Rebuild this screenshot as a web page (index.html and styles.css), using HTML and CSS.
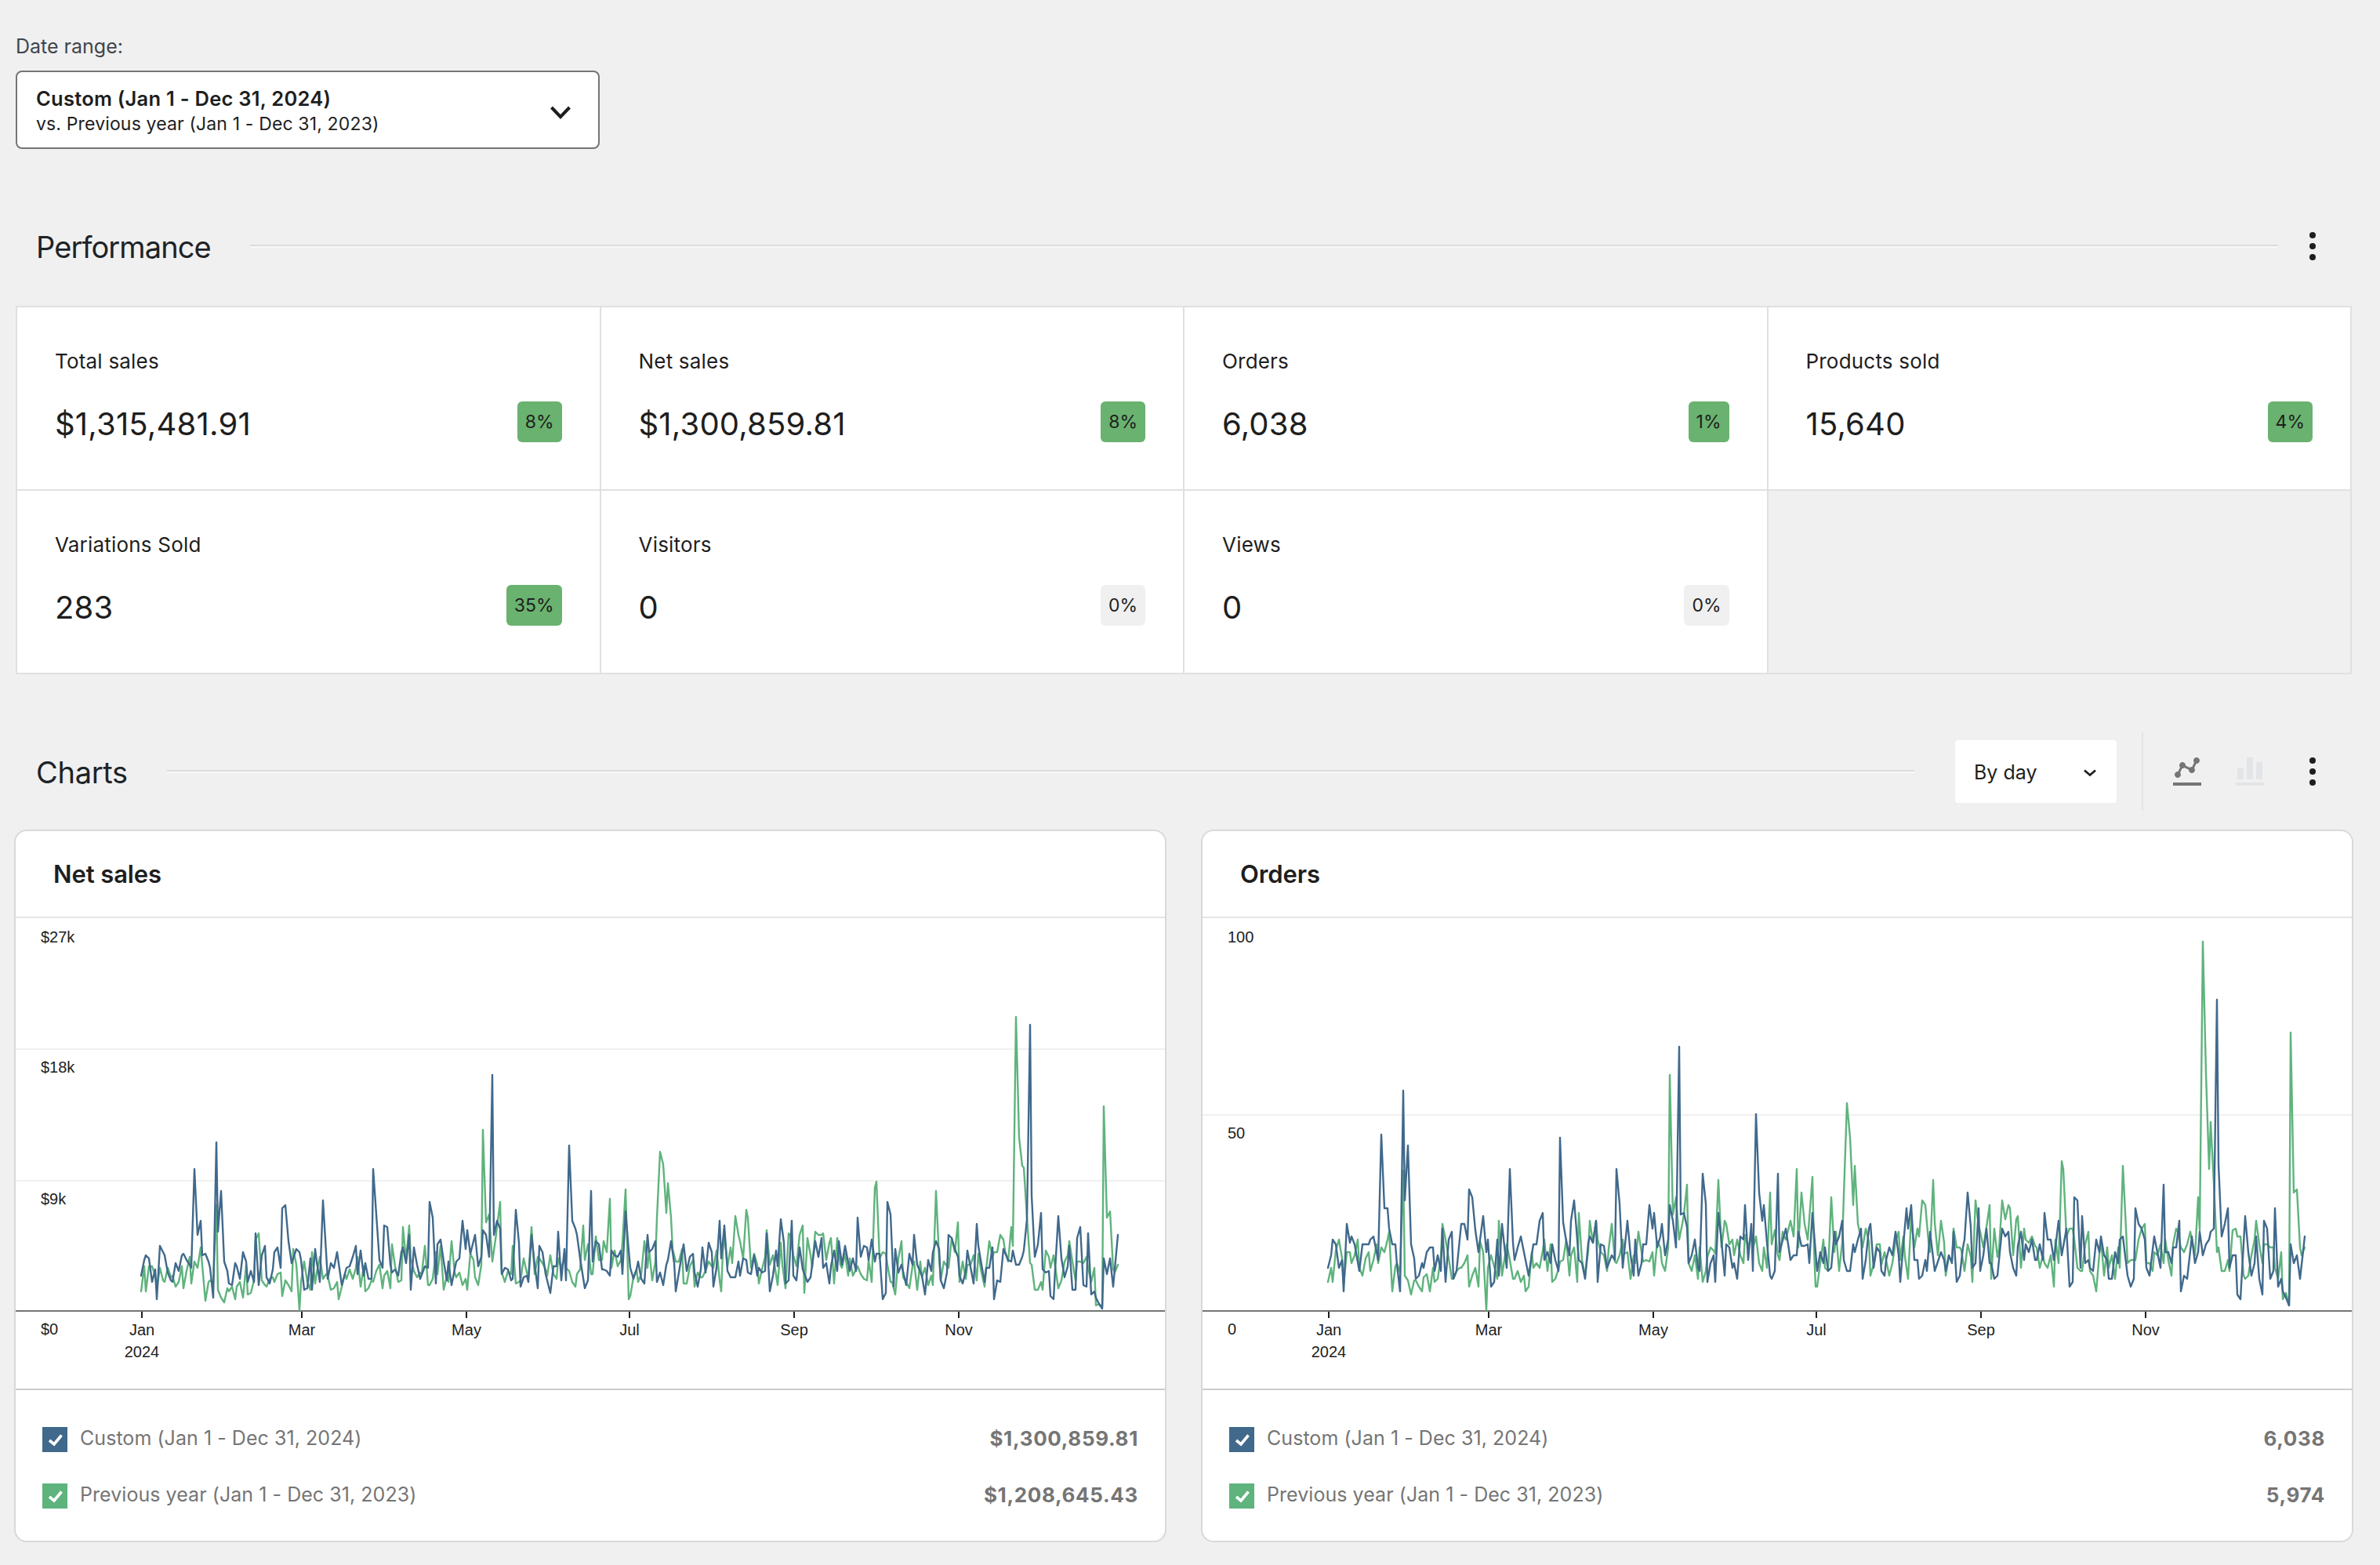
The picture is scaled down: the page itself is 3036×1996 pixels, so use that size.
FILE: index.html
```html
<!DOCTYPE html>
<html lang="en">
<head>
  <meta charset="UTF-8">
  <meta name="viewport" content="width=device-width, initial-scale=1.0">
  <title>Analytics Overview</title>
  <link rel="stylesheet" href="styles.css">
</head>
<body>
  <!-- Date filter -->
  <section class="filters">
    <span class="filter-label">Date range:</span>
    <button class="date-picker">
      <span class="date-picker-text">
        <strong>Custom (Jan 1 - Dec 31, 2024)</strong>
        <span>vs. Previous year (Jan 1 - Dec 31, 2023)</span>
      </span>
      <svg class="icon" viewBox="0 0 48 48"><path d="M12.5 19L24 31l11.500-12" fill="none" stroke="#1e1e1e" stroke-width="4"/></svg>
    </button>
  </section>

  <!-- Performance -->
  <section class="performance">
    <div class="section-header">
      <h2 class="section-title">Performance</h2>
      <hr>
      <svg class="icon" viewBox="0 0 48 48"><circle cx="24" cy="10" r="4"/><circle cx="24" cy="24" r="4"/><circle cx="24" cy="38" r="4"/></svg>
    </div>
    <div class="stats">
      <div class="stat">
        <div class="stat-label">Total sales</div>
        <div class="stat-data"><span class="stat-value">$1,315,481.91</span><span class="badge up">8%</span></div>
      </div>
      <div class="stat">
        <div class="stat-label">Net sales</div>
        <div class="stat-data"><span class="stat-value">$1,300,859.81</span><span class="badge up">8%</span></div>
      </div>
      <div class="stat">
        <div class="stat-label">Orders</div>
        <div class="stat-data"><span class="stat-value">6,038</span><span class="badge up">1%</span></div>
      </div>
      <div class="stat">
        <div class="stat-label">Products sold</div>
        <div class="stat-data"><span class="stat-value">15,640</span><span class="badge up">4%</span></div>
      </div>
      <div class="stat">
        <div class="stat-label">Variations Sold</div>
        <div class="stat-data"><span class="stat-value">283</span><span class="badge up">35%</span></div>
      </div>
      <div class="stat">
        <div class="stat-label">Visitors</div>
        <div class="stat-data"><span class="stat-value">0</span><span class="badge">0%</span></div>
      </div>
      <div class="stat">
        <div class="stat-label">Views</div>
        <div class="stat-data"><span class="stat-value">0</span><span class="badge">0%</span></div>
      </div>
      <div class="stat empty"></div>
    </div>
  </section>

  <!-- Charts -->
  <section class="charts">
    <div class="section-header">
      <h2 class="section-title">Charts</h2>
      <hr>
      <div class="interval">
        <span>By day</span>
        <svg viewBox="0 0 16 10"><path d="M1 1.500l7 6 7-6" fill="none" stroke="#1e1e1e" stroke-width="2.800"/></svg>
      </div>
      <div class="chart-types">
        <svg class="icon line-type" viewBox="0 0 24 24"><path d="M3 19h18v2H3zm3-3c1.100 0 2-.9 2-2 0-.5-.2-1-.5-1.300L8.800 10H9c.5 0 1-.2 1.300-.5l2.700 1.400v.1c0 1.100.9 2 2 2s2-.9 2-2c0-.5-.2-.9-.5-1.300L17.800 7h.2c1.100 0 2-.9 2-2s-.9-2-2-2-2 .9-2 2c0 .5.2 1 .5 1.300L15.200 9H15c-.5 0-1 .2-1.300.5L11 8.200V8c0-1.100-.9-2-2-2s-2 .9-2 2c0 .5.2 1 .5 1.300L6.200 12H6c-1.100 0-2 .9-2 2s.9 2 2 2z"/></svg>
        <svg class="icon bar-type" viewBox="0 0 24 24"><path d="M21 21H3v-2h18v2zM8 10H4v7h4v-7zm6-7h-4v14h4V3zm6 3h-4v11h4V6z"/></svg>
        <svg class="icon" viewBox="0 0 48 48"><circle cx="24" cy="10" r="4"/><circle cx="24" cy="24" r="4"/><circle cx="24" cy="38" r="4"/></svg>
      </div>
    </div>

    <div class="chart-grid">
      <div class="card">
        <h3 class="card-title">Net sales</h3>
        <svg class="chart" viewBox="0 0 733 300">
          <path class="grid" d="M0 83.500h733M0 167.500h733"/>
          <path class="axis" d="M0 250.500h733"/>
          <path class="ticks" d="M80.500 251v4M182.500 251v4M287.500 251v4M391.500 251v4M496.500 251v4M601.500 251v4"/>
          <g transform="translate(80 250) scale(1 -1)">
            <polyline class="line previous" points="0,12 2,28 3,12 5,28 7,28 9,22 10,14 12,27 14,19 15,18 17,27 19,21 20,22 22,15 24,18 26,28 27,14 29,25 31,34 32,17 34,31 36,27 38,40 41,6 43,18 44,19 46,17 48,67 49,13 51,8 53,5 55,14 56,12 58,15 60,7 61,15 63,18 65,8 67,29 68,10 70,11 72,19 73,45 75,49 77,19 79,16 80,15 82,20 84,21 85,18 87,23 89,24 90,9 92,19 94,16 96,12 97,39 99,29 101,0 102,18 104,31 106,18 108,13 109,37 111,17 112,24 114,34 116,20 118,23 119,22 121,13 123,14 125,18 126,7 128,15 130,23 131,20 133,26 135,20 137,27 138,34 140,15 142,28 143,12 145,14 147,19 148,18 150,25 152,29 154,14 155,22 157,25 159,14 160,42 162,28 164,18 166,19 167,53 169,32 171,54 172,33 174,25 176,21 178,24 179,23 181,41 183,16 184,16 186,20 188,37 189,23 191,41 193,13 195,22 196,18 198,44 200,24 201,21 203,24 205,16 207,20 208,13 210,36 212,32 213,21 215,16 217,29 218,115 220,56 222,61 224,31 226,45 227,53 229,69 230,24 232,18 234,25 236,23 237,41 239,17 241,18 242,19 244,33 246,24 247,21 249,53 251,23 253,34 254,33 256,30 258,26 259,22 261,35 263,23 265,20 266,33 268,27 270,33 271,27 273,25 275,18 277,15 278,23 280,26 282,54 283,32 285,42 287,23 288,23 290,47 292,32 294,32 295,44 297,37 299,71 300,27 302,38 304,28 306,32 307,43 309,77 311,7 312,9 314,21 316,26 317,18 319,23 321,44 323,27 324,39 326,19 328,31 329,59 331,101 333,93 335,62 336,81 338,59 339,39 341,31 343,31 345,39 346,17 348,17 350,28 352,32 353,15 355,24 357,21 358,21 360,25 362,31 364,28 365,27 367,38 368,29 369,19 370,12 371,36 372,49 374,28 376,40 377,30 379,60 381,48 382,44 384,33 386,64 387,59 389,27 391,36 393,29 394,17 396,26 398,34 399,51 401,29 403,35 404,29 406,16 408,43 409,29 411,14 413,49 414,48 416,35 418,28 420,48 422,54 423,11 425,46 427,35 428,27 430,50 432,48 434,48 435,49 437,32 439,43 440,46 442,17 444,46 446,29 447,27 449,36 451,22 452,33 454,22 456,26 457,28 459,23 461,20 463,19 464,32 466,18 468,78 469,82 471,33 473,37 475,36 476,29 478,18 479,18 481,10 483,33 485,44 486,21 488,18 490,14 492,28 493,31 495,13 497,31 498,21 500,27 502,16 504,22 505,16 507,76 509,33 510,19 512,31 514,28 515,27 517,46 519,37 521,56 522,18 524,31 526,20 527,29 529,29 531,35 533,19 534,36 536,24 538,15 539,26 541,44 543,34 544,37 546,37 548,48 550,45 551,38 553,31 555,53 556,41 558,187 560,110 562,92 563,91 565,59 567,30 568,29 570,13 572,13 574,18 575,13 577,38 579,34 580,27 582,35 584,21 585,14 587,19 589,31 591,35 592,44 594,31 596,19 597,31 599,31 601,30 603,34 604,27 606,18 608,27 609,3 611,4 613,2 614,130 616,59 618,63 620,26 621,24 623,29"/>
            <polyline class="line current" points="0,22 2,32 3,35 5,33 7,18 9,26 10,7 12,41 14,37 15,35 17,24 19,19 20,18 22,30 24,25 26,35 27,36 29,32 31,29 32,27 34,90 36,48 38,57 39,35 41,36 43,31 44,27 46,8 48,107 49,50 51,76 53,31 55,25 56,17 58,16 60,30 61,28 63,20 65,37 67,31 68,18 70,25 72,18 73,49 75,16 77,35 79,41 80,21 82,17 84,26 85,37 87,40 89,27 90,65 92,67 94,44 96,30 97,33 99,39 101,37 102,32 104,13 106,14 108,33 109,13 111,39 112,31 114,18 116,70 119,20 121,30 123,27 125,37 128,16 131,27 133,28 135,34 137,41 138,23 140,38 142,22 143,30 145,20 147,20 148,90 150,61 152,32 154,27 155,54 157,53 159,29 160,24 162,26 164,22 166,37 167,40 169,30 171,48 172,13 174,40 176,29 178,20 181,28 183,27 184,69 186,59 188,17 189,42 191,45 193,31 195,19 196,31 198,16 201,31 203,33 205,57 207,39 208,51 210,36 213,48 215,28 217,34 218,51 220,48 222,34 224,150 225,48 227,57 229,52 230,23 232,27 234,26 236,19 237,20 239,64 241,43 242,15 244,21 246,22 247,18 249,48 251,29 253,14 254,41 256,37 258,23 261,11 263,28 265,28 266,50 268,19 270,39 271,19 273,105 275,57 277,52 278,48 280,33 283,14 285,19 287,76 288,31 290,44 292,42 294,26 295,26 297,25 299,22 300,38 302,35 304,34 306,38 307,23 309,63 311,38 312,27 314,20 316,26 317,31 319,20 321,17 323,48 324,37 326,39 328,44 329,18 331,24 333,16 335,29 336,32 338,44 340,30 341,12 343,24 346,42 348,25 350,34 352,36 353,24 355,15 357,26 358,40 360,24 362,43 364,37 365,15 367,27 369,57 370,33 372,54 374,25 376,21 379,21 381,31 382,22 384,33 386,32 387,24 389,23 391,35 393,22 394,27 396,24 398,25 399,49 401,12 403,22 405,38 406,28 408,58 410,43 411,17 413,19 415,57 416,22 418,19 420,40 422,26 425,18 427,21 430,44 432,34 434,46 435,27 437,30 439,17 440,28 442,38 444,25 445,44 447,29 449,41 452,25 454,33 456,25 457,59 459,34 461,41 463,40 464,32 466,45 468,31 469,36 471,36 473,7 475,11 476,69 478,61 480,15 481,39 483,24 485,29 488,16 490,36 492,29 493,48 495,29 498,22 500,10 502,32 504,25 505,37 507,44 509,39 510,19 512,14 514,24 515,48 517,46 519,39 521,34 522,22 524,17 526,25 527,38 531,17 533,55 534,41 536,29 538,18 539,27 541,27 543,40 544,7 546,19 548,18 550,39 553,32 555,31 556,38 558,29 560,29 562,34 563,38 565,58 567,182 568,73 570,34 572,42 574,62 575,26 577,24 579,25 580,9 582,7 583,26 585,60 587,33 589,21 591,28 592,41 594,13 596,13 597,46 599,53 601,16 603,15 604,49 606,10 608,12 609,8 611,4 613,1 614,33 616,23 618,33 620,15 623,48"/>
          </g>
          <g class="y-labels">
            <text x="16" y="15.500">$27k</text>
            <text x="16" y="98.500">$18k</text>
            <text x="16" y="182.500">$9k</text>
            <text x="16" y="265.500">$0</text>
          </g>
          <g class="x-labels">
            <text x="80.500" y="265.800">Jan</text>
            <text x="80.500" y="279.800">2024</text>
            <text x="182.500" y="265.800">Mar</text>
            <text x="287.500" y="265.800">May</text>
            <text x="391.500" y="265.800">Jul</text>
            <text x="496.500" y="265.800">Sep</text>
            <text x="601.500" y="265.800">Nov</text>
          </g>
        </svg>
        <div class="legend">
          <div class="legend-item">
            <span class="checkbox current"><svg viewBox="0 0 32 32"><path d="M9 17l6 5 9.500-11.500"/></svg></span>
            <span class="legend-label">Custom (Jan 1 - Dec 31, 2024)</span>
            <span class="legend-value">$1,300,859.81</span>
          </div>
          <div class="legend-item">
            <span class="checkbox previous"><svg viewBox="0 0 32 32"><path d="M9 17l6 5 9.500-11.500"/></svg></span>
            <span class="legend-label">Previous year (Jan 1 - Dec 31, 2023)</span>
            <span class="legend-value">$1,208,645.43</span>
          </div>
        </div>
      </div>

      <div class="card">
        <h3 class="card-title">Orders</h3>
        <svg class="chart" viewBox="0 0 733 300">
          <path class="grid" d="M0 125.500h733"/>
          <path class="axis" d="M0 250.500h733"/>
          <path class="ticks" d="M80.500 251v4M182.500 251v4M287.500 251v4M391.500 251v4M496.500 251v4M601.500 251v4"/>
          <g transform="translate(80 250) scale(1 -1)">
            <polyline class="line previous" points="0,18 2,27 3,18 5,38 7,45 9,33 10,16 12,37 14,37 15,30 17,35 19,45 20,27 22,22 24,33 26,37 27,25 29,32 31,42 32,30 34,40 36,37 38,45 39,50 41,12 43,28 44,30 46,24 48,89 49,22 51,19 53,10 55,19 56,19 58,15 60,12 61,21 63,23 65,12 67,27 68,18 70,20 72,34 73,55 75,45 77,33 79,20 80,20 82,25 84,27 85,27 87,30 89,35 90,15 92,22 94,27 96,15 97,44 99,37 101,0 102,27 104,35 106,28 108,20 109,57 111,22 114,42 116,32 118,20 119,20 121,25 123,18 125,22 126,12 128,15 130,37 131,27 133,30 135,27 137,38 138,45 140,25 142,42 143,18 145,20 147,26 148,31 150,32 152,45 154,22 155,35 157,40 159,18 160,62 162,32 164,22 166,38 167,57 169,43 171,57 172,45 174,37 176,35 178,25 179,39 181,55 183,31 184,30 186,35 188,45 189,36 191,37 193,20 195,35 196,30 198,50 200,37 201,31 203,32 205,31 207,37 208,22 210,44 212,40 213,30 215,25 217,40 218,150 220,61 222,72 224,45 226,55 227,61 229,80 230,30 232,25 234,35 236,20 237,40 239,18 241,25 242,34 244,40 246,38 247,36 249,83 251,40 253,57 254,55 256,42 258,45 259,35 261,45 263,35 265,30 266,48 268,40 270,48 271,39 273,47 275,30 277,25 278,40 280,27 282,75 283,42 285,51 287,35 288,32 290,50 292,45 295,57 297,47 299,90 300,40 302,75 304,55 306,45 309,85 310,39 311,15 312,15 314,30 316,45 317,27 319,25 321,72 323,37 324,50 326,25 328,43 329,73 331,132 333,110 335,67 336,92 338,55 340,46 341,40 343,52 345,44 346,22 348,29 350,42 352,42 353,29 355,37 358,22 360,30 362,44 364,50 365,32 367,47 368,34 370,20 372,59 374,40 376,52 377,47 379,70 381,67 383,44 384,37 386,83 387,56 389,35 391,57 393,43 394,22 396,34 398,32 399,52 401,40 403,40 404,38 406,25 408,42 410,34 411,18 413,70 415,54 416,50 418,40 420,53 422,67 423,20 425,52 427,34 428,39 430,70 432,58 434,67 435,65 437,35 439,58 440,60 442,27 444,52 445,45 447,43 449,47 451,41 452,40 454,27 456,35 457,30 459,27 461,35 463,15 464,45 466,30 468,95 469,90 471,47 473,52 475,52 476,45 478,27 480,25 481,25 483,42 485,50 486,25 488,22 490,12 492,36 493,45 495,22 497,40 498,27 500,35 502,20 504,40 505,27 507,92 509,52 510,30 512,32 515,32 517,45 519,52 521,55 522,30 524,30 526,25 527,37 529,35 531,42 533,30 534,45 536,32 538,22 539,42 541,52 542,50 544,40 546,37 548,42 550,50 551,45 553,35 555,72 556,51 558,235 560,151 562,90 563,120 565,81 567,37 568,40 570,25 572,25 574,32 575,25 577,51 579,52 580,47 582,47 584,22 585,20 587,22 589,35 591,45 592,57 594,42 596,30 597,42 599,42 601,40 603,40 604,27 606,20 608,37 609,7 611,11 613,3 614,177 616,75 618,77 620,40 621,35 623,40"/>
            <polyline class="line current" points="0,27 2,35 3,45 5,42 7,27 9,32 10,12 12,55 14,43 15,47 17,42 20,25 22,42 26,42 27,45 29,47 32,32 34,112 36,65 38,65 39,52 41,42 43,42 44,29 46,12 48,140 49,70 51,105 53,42 55,33 56,20 58,22 60,30 61,27 63,37 65,40 67,40 68,25 70,35 72,25 73,52 75,18 77,45 79,50 80,20 82,25 85,55 87,55 89,45 90,77 92,72 94,51 96,37 97,45 99,60 101,37 102,45 104,15 106,18 108,45 109,22 111,55 114,27 116,90 118,43 119,32 121,40 123,47 128,22 131,42 133,42 135,57 137,62 138,32 140,37 142,30 143,42 145,32 147,25 148,110 150,56 152,44 154,35 155,57 157,70 160,32 162,30 164,20 166,43 167,47 169,43 171,57 172,18 174,42 176,41 178,27 181,35 183,32 184,90 186,68 188,27 191,57 193,35 195,22 196,45 198,22 200,30 201,42 203,42 205,67 207,52 208,62 210,40 212,47 213,55 215,35 217,45 218,67 220,57 222,40 224,168 225,61 227,62 229,53 230,30 232,35 234,45 236,27 237,25 239,87 241,68 242,18 244,30 246,35 247,18 249,62 251,44 253,22 254,42 256,40 258,27 259,30 261,20 263,47 265,45 266,67 268,32 270,55 271,25 273,125 275,75 277,57 278,67 280,43 282,22 283,20 285,25 287,87 288,37 292,52 295,32 297,35 299,35 300,50 302,41 304,41 306,42 307,30 309,62 312,25 314,37 316,30 317,40 319,25 321,27 323,50 324,42 326,47 328,57 329,32 331,25 333,25 335,42 336,37 338,45 340,52 341,20 343,32 345,52 346,55 348,27 350,40 352,37 353,25 355,22 356,32 358,40 360,35 362,50 364,35 365,18 367,42 369,65 370,52 372,67 374,32 376,32 377,20 379,22 381,32 382,25 384,50 387,25 391,37 393,32 394,25 396,35 398,30 399,50 401,18 403,22 405,40 406,45 408,75 410,53 411,27 413,30 415,65 416,25 418,35 420,52 422,30 423,30 425,20 427,22 430,52 432,47 434,50 435,37 437,27 439,22 440,41 442,50 444,32 445,42 447,37 449,45 451,32 452,32 454,42 456,32 457,62 459,45 461,45 463,32 466,57 468,35 471,52 473,15 475,18 476,72 478,70 480,27 481,60 483,30 485,32 486,27 488,25 490,45 492,37 493,47 495,35 497,32 498,20 500,20 502,37 504,30 505,45 507,47 510,22 512,15 514,20 515,65 517,55 519,52 521,45 522,27 524,22 527,47 531,27 533,80 534,37 536,37 538,30 539,40 541,40 543,57 544,12 546,22 548,20 551,47 553,30 555,37 556,50 558,35 560,42 562,45 563,50 565,52 567,198 568,93 570,47 572,55 574,65 575,27 577,35 579,35 580,10 582,7 585,60 587,37 589,22 591,30 592,47 594,20 596,10 597,57 599,52 601,20 603,25 604,65 606,15 608,20 609,12 611,8 613,3 614,42 616,30 618,35 620,20 623,47"/>
          </g>
          <g class="y-labels">
            <text x="16" y="15.500">100</text>
            <text x="16" y="140.500">50</text>
            <text x="16" y="265.500">0</text>
          </g>
          <g class="x-labels">
            <text x="80.500" y="265.800">Jan</text>
            <text x="80.500" y="279.800">2024</text>
            <text x="182.500" y="265.800">Mar</text>
            <text x="287.500" y="265.800">May</text>
            <text x="391.500" y="265.800">Jul</text>
            <text x="496.500" y="265.800">Sep</text>
            <text x="601.500" y="265.800">Nov</text>
          </g>
        </svg>
        <div class="legend">
          <div class="legend-item">
            <span class="checkbox current"><svg viewBox="0 0 32 32"><path d="M9 17l6 5 9.500-11.500"/></svg></span>
            <span class="legend-label">Custom (Jan 1 - Dec 31, 2024)</span>
            <span class="legend-value">6,038</span>
          </div>
          <div class="legend-item">
            <span class="checkbox previous"><svg viewBox="0 0 32 32"><path d="M9 17l6 5 9.500-11.500"/></svg></span>
            <span class="legend-label">Previous year (Jan 1 - Dec 31, 2023)</span>
            <span class="legend-value">5,974</span>
          </div>
        </div>
      </div>
    </div>
  </section>
</body>
</html>
```
FILE: styles.css
```css
/* Base Styles */
* {
  box-sizing: border-box;
}
body {
  margin: 0;
  padding: 41px 36px 0 20px;
  background: #f0f0f0;
  color: #1e1e1e;
  font-family: Inter, 'Liberation Sans', sans-serif;
}
h2, h3 {
  margin: 0;
}
svg {
  display: block;
}
.icon {
  width: 48px;
  height: 48px;
  flex-shrink: 0;
  fill: #1e1e1e;
}

/* Date filter */
.filter-label {
  display: block;
  margin-bottom: 13px;
  font-size: 25px;
  line-height: 36px;
  color: #40464d;
}
.date-picker {
  display: flex;
  align-items: center;
  justify-content: space-between;
  width: 745px;
  height: 100px;
  padding: 3px 24px 0 24px;
  border: 2px solid #757575;
  border-radius: 8px;
  background: #fff;
  color: #1e1e1e;
  font-family: inherit;
  text-align: left;
}
.date-picker-text {
  display: flex;
  flex-direction: column;
  font-size: 23px;
  line-height: 32px;
  letter-spacing: 0.15px;
}
.date-picker-text strong {
  font-size: 25.5px;
  font-weight: 600;
  letter-spacing: 0.25px;
}

/* Section headers */
.section-header {
  display: flex;
  align-items: center;
  height: 100px;
  margin-top: 74px;
  padding: 0 26px 0 26px;
}
.section-title {
  padding-top: 1px;
  font-size: 38px;
  font-weight: 400;
  letter-spacing: -0.9px;
  color: #1d2327;
}
.section-header hr {
  flex: 1;
  height: 4px;
  margin: 0 20px 0 50px;
  border: 0;
  border-top: 2px solid #dcdcde;
  background: #f8f8f8;
}

/* Performance */
.stats {
  display: grid;
  grid-template-columns: repeat(4, 1fr);
  margin-top: 26px;
  border-top: 2px solid #e0e0e0;
  border-left: 2px solid #e0e0e0;
}
.stat {
  height: 234px;
  padding: 53px 48px 0 48px;
  border-right: 2px solid #e0e0e0;
  border-bottom: 2px solid #e0e0e0;
  background: #fff;
}
.stat.empty {
  background: #f0f0f0;
}
.stat-label {
  font-size: 26px;
  line-height: 32px;
  letter-spacing: 0.2px;
}
.stat-data {
  display: flex;
  align-items: center;
  justify-content: space-between;
  height: 60px;
  margin-top: 33px;
}
.stat-value {
  font-size: 40px;
  letter-spacing: 0.2px;
}
.badge {
  margin-bottom: 4px;
  padding: 0 10px;
  border-radius: 6px;
  background: #f0f0f0;
  font-size: 23px;
  line-height: 52px;
}
.badge.up {
  background: #6ab26f;
}

/* Charts */
.charts .section-title {
  letter-spacing: -0.3px;
}
.charts .section-header hr {
  margin-right: 52px;
}
.interval {
  display: flex;
  align-items: center;
  justify-content: space-between;
  width: 206px;
  height: 80px;
  padding: 1px 26px 0 24px;
  border-radius: 4px;
  background: #fff;
  font-size: 25px;
}
.interval svg {
  width: 16px;
  height: 10px;
  margin-top: 2px;
}
.chart-types {
  display: flex;
  align-items: center;
  gap: 32px;
  height: 100px;
  margin-left: 32px;
  padding-left: 32px;
  border-left: 2px solid #e2e4e7;
}
.line-type {
  fill: #757575;
}
.bar-type {
  fill: #e2e4e7;
}
.chart-grid {
  display: grid;
  grid-template-columns: 1fr 1fr;
  gap: 44px;
  margin: 24px -2px 0;
}
.card {
  border: 2px solid #d9d9d9;
  border-radius: 16px;
  background: #fff;
}
.card-title {
  height: 111px;
  padding-left: 48px;
  border-bottom: 2px solid #e4e4e4;
  font-size: 31px;
  font-weight: 600;
  line-height: 109px;
  letter-spacing: -0.1px;
}
.chart {
  width: 100%;
  height: 600px;
}
.chart text {
  font: 10px 'Liberation Sans', Arial, sans-serif;
  fill: #1e1e1e;
}
.x-labels {
  text-anchor: middle;
}
.grid, .axis, .ticks {
  stroke: #f0f0f0;
}
.axis {
  stroke: #757575;
}
.ticks {
  stroke: #1e1e1e;
}
.line {
  fill: none;
  stroke-width: 1.2;
  stroke-linejoin: round;
  stroke-linecap: round;
}
.line.current {
  stroke: #40698c;
}
.line.previous {
  stroke: #5fb37d;
}

/* Legend */
.legend {
  height: 194px;
  padding: 27px 34px 0;
  border-top: 2px solid #cccccc;
  color: #757575;
}
.legend-item {
  display: flex;
  align-items: center;
  height: 72px;
}
.checkbox {
  width: 32px;
  height: 32px;
}
.checkbox path {
  fill: none;
  stroke: #fff;
  stroke-width: 3.6;
}
.checkbox.current {
  background: #40698c;
}
.checkbox.previous {
  background: #5fb37d;
}
.legend-label {
  flex: 1;
  padding: 0 0 4px 16px;
  font-size: 25px;
  letter-spacing: 0.05px;
}
.legend-value {
  padding-bottom: 4px;
  font-size: 26px;
  font-weight: 700;
  letter-spacing: 0.65px;
}
```
